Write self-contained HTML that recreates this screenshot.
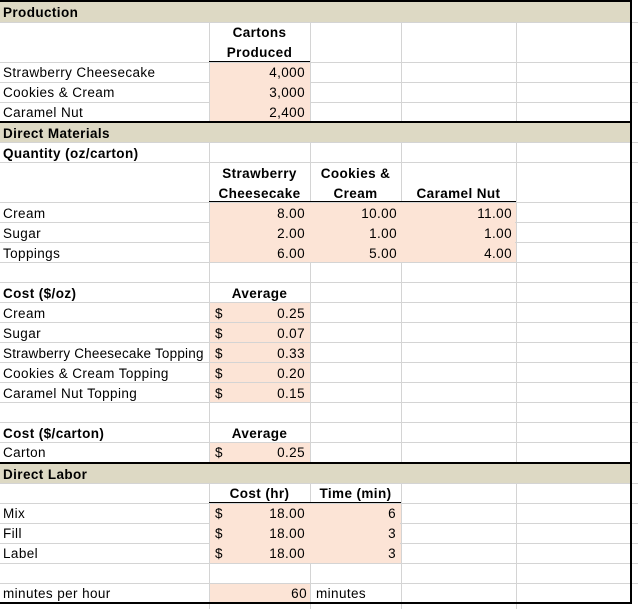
<!DOCTYPE html>
<html><head><meta charset="utf-8"><style>
*{margin:0;padding:0;box-sizing:border-box}
body{width:638px;height:609px;background:#fff;position:relative;overflow:hidden;font-family:"Liberation Sans",sans-serif;font-size:13.5px;color:#000;letter-spacing:0.4px}
div{position:absolute}
.h{height:1px;background:#d4d4d4;left:0;width:638px}
.v{width:1px;background:#d4d4d4}
.k{background:#000}
.band{background:#ddd9c4;left:0;width:630px;height:20px}
.p{background:#fce4d6}
.t{line-height:20px;height:20px;white-space:nowrap;margin-top:1px}
.b{font-weight:bold}
.r{text-align:right}
.c{text-align:center}
</style></head><body>
<div class="p" style="left:209px;top:62px;width:101px;height:60px"></div>
<div class="p" style="left:209px;top:202px;width:307px;height:60px"></div>
<div class="p" style="left:209px;top:302px;width:101px;height:100px"></div>
<div class="p" style="left:209px;top:442px;width:101px;height:20px"></div>
<div class="p" style="left:209px;top:503px;width:192px;height:60px"></div>
<div class="p" style="left:209px;top:583px;width:101px;height:20px"></div>
<div class="h" style="top:22px"></div><div class="h" style="top:62px"></div><div class="h" style="top:82px"></div><div class="h" style="top:102px"></div>
<div class="h" style="top:142px"></div><div class="h" style="top:162px"></div><div class="h" style="top:202px"></div><div class="h" style="top:222px"></div><div class="h" style="top:242px"></div><div class="h" style="top:262px"></div><div class="h" style="top:282px"></div><div class="h" style="top:302px"></div><div class="h" style="top:322px"></div><div class="h" style="top:342px"></div><div class="h" style="top:362px"></div><div class="h" style="top:382px"></div><div class="h" style="top:402px"></div><div class="h" style="top:422px"></div><div class="h" style="top:442px"></div>
<div class="h" style="top:483px"></div><div class="h" style="top:503px"></div><div class="h" style="top:523px"></div><div class="h" style="top:543px"></div><div class="h" style="top:563px"></div><div class="h" style="top:583px"></div>
<div class="v" style="left:209px;top:22px;height:587px"></div>
<div class="v" style="left:310px;top:22px;height:587px"></div>
<div class="v" style="left:401px;top:22px;height:587px"></div>
<div class="v" style="left:516px;top:22px;height:587px"></div>
<div class="p" style="left:210px;top:203px;width:305px;height:59px"></div>
<div class="p" style="left:210px;top:504px;width:190px;height:59px"></div>
<div class="p" style="left:210px;top:63px;width:100px;height:59px"></div>
<div class="band" style="top:2px"></div>
<div class="band" style="top:123px;height:19px"></div>
<div class="band" style="top:464px;height:19px"></div>
<div class="k" style="left:0;top:0;width:632px;height:2px"></div>
<div class="k" style="left:0;top:121px;width:632px;height:2px"></div>
<div class="k" style="left:0;top:462px;width:632px;height:2px"></div>
<div class="k" style="left:0;top:602px;width:632px;height:2px"></div>
<div class="k" style="left:630px;top:0;width:2px;height:604px"></div>
<div class="k" style="left:209px;top:61px;width:101px;height:1px"></div>
<div class="k" style="left:209px;top:201px;width:307px;height:1px"></div>
<div class="k" style="left:209px;top:502px;width:192px;height:1px"></div>
<div class="t b" style="left:3px;top:2px">Production</div>
<div class="t b c" style="left:209px;top:22px;width:101px">Cartons</div>
<div class="t b c" style="left:209px;top:42px;width:101px">Produced</div>
<div class="t" style="left:3px;top:62px">Strawberry Cheesecake</div>
<div class="t" style="left:3px;top:82px">Cookies &amp; Cream</div>
<div class="t" style="left:3px;top:102px">Caramel Nut</div>
<div class="t r" style="left:209px;top:62px;width:96px">4,000</div>
<div class="t r" style="left:209px;top:82px;width:96px">3,000</div>
<div class="t r" style="left:209px;top:102px;width:96px">2,400</div>
<div class="t b" style="left:3px;top:123px">Direct Materials</div>
<div class="t b" style="left:3px;top:143px">Quantity (oz/carton)</div>
<div class="t b c" style="left:209px;top:163px;width:101px">Strawberry</div>
<div class="t b c" style="left:209px;top:183px;width:101px">Cheesecake</div>
<div class="t b c" style="left:310px;top:163px;width:91px">Cookies &amp;</div>
<div class="t b c" style="left:310px;top:183px;width:91px">Cream</div>
<div class="t b c" style="left:401px;top:183px;width:115px">Caramel Nut</div>
<div class="t" style="left:3px;top:203px">Cream</div>
<div class="t" style="left:3px;top:223px">Sugar</div>
<div class="t" style="left:3px;top:243px">Toppings</div>
<div class="t r" style="left:209px;top:203px;width:96px">8.00</div>
<div class="t r" style="left:209px;top:223px;width:96px">2.00</div>
<div class="t r" style="left:209px;top:243px;width:96px">6.00</div>
<div class="t r" style="left:310px;top:203px;width:87px">10.00</div>
<div class="t r" style="left:310px;top:223px;width:87px">1.00</div>
<div class="t r" style="left:310px;top:243px;width:87px">5.00</div>
<div class="t r" style="left:401px;top:203px;width:111px">11.00</div>
<div class="t r" style="left:401px;top:223px;width:111px">1.00</div>
<div class="t r" style="left:401px;top:243px;width:111px">4.00</div>
<div class="t b" style="left:3px;top:283px">Cost ($/oz)</div>
<div class="t b c" style="left:209px;top:283px;width:101px">Average</div>
<div class="t" style="left:3px;top:303px">Cream</div>
<div class="t" style="left:3px;top:323px">Sugar</div>
<div class="t" style="left:3px;top:343px;letter-spacing:0.2px">Strawberry Cheesecake Topping</div>
<div class="t" style="left:3px;top:363px">Cookies &amp; Cream Topping</div>
<div class="t" style="left:3px;top:383px">Caramel Nut Topping</div>
<div class="t" style="left:215px;top:303px">$</div><div class="t r" style="left:209px;top:303px;width:96px">0.25</div>
<div class="t" style="left:215px;top:323px">$</div><div class="t r" style="left:209px;top:323px;width:96px">0.07</div>
<div class="t" style="left:215px;top:343px">$</div><div class="t r" style="left:209px;top:343px;width:96px">0.33</div>
<div class="t" style="left:215px;top:363px">$</div><div class="t r" style="left:209px;top:363px;width:96px">0.20</div>
<div class="t" style="left:215px;top:383px">$</div><div class="t r" style="left:209px;top:383px;width:96px">0.15</div>
<div class="t b" style="left:3px;top:423px">Cost ($/carton)</div>
<div class="t b c" style="left:209px;top:423px;width:101px">Average</div>
<div class="t" style="left:3px;top:442px">Carton</div>
<div class="t" style="left:215px;top:442px">$</div><div class="t r" style="left:209px;top:442px;width:96px">0.25</div>
<div class="t b" style="left:3px;top:464px">Direct Labor</div>
<div class="t b c" style="left:209px;top:483px;width:101px">Cost (hr)</div>
<div class="t b c" style="left:310px;top:483px;width:91px">Time (min)</div>
<div class="t" style="left:3px;top:503px">Mix</div>
<div class="t" style="left:3px;top:523px">Fill</div>
<div class="t" style="left:3px;top:543px">Label</div>
<div class="t" style="left:215px;top:503px">$</div><div class="t r" style="left:209px;top:503px;width:96px">18.00</div>
<div class="t" style="left:215px;top:523px">$</div><div class="t r" style="left:209px;top:523px;width:96px">18.00</div>
<div class="t" style="left:215px;top:543px">$</div><div class="t r" style="left:209px;top:543px;width:96px">18.00</div>
<div class="t r" style="left:310px;top:503px;width:86px">6</div>
<div class="t r" style="left:310px;top:523px;width:86px">3</div>
<div class="t r" style="left:310px;top:543px;width:86px">3</div>
<div class="t" style="left:3px;top:583px">minutes per hour</div>
<div class="t r" style="left:209px;top:583px;width:98px">60</div>
<div class="t" style="left:316px;top:583px">minutes</div>
</body></html>
